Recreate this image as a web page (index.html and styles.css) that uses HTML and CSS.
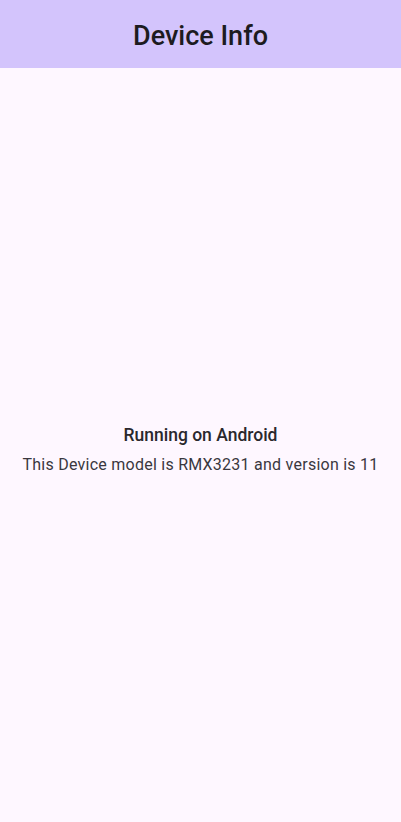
FILE: index.html
```html
<!DOCTYPE html>
<html>
<head>
<meta charset="utf-8">
<link rel="stylesheet" href="styles.css">
</head>
<body>
<div class="app">
  <header class="appbar"><h1 class="title">Device Info</h1></header>
  <main class="content">
    <div class="info">
      <p class="heading">Running on Android</p>
      <p class="detail">This Device model is RMX3231 and version is 11</p>
    </div>
  </main>
</div>
</body>
</html>
```
FILE: styles.css
```css
html, body { margin: 0; padding: 0; }
body { font-family: Roboto, "Noto Sans", sans-serif; background: #fef7ff; }
.app { display: flex; flex-direction: column; height: 822px; }
.appbar { height: 68px; background: #d3c4fc; display: flex; align-items: center; justify-content: center; flex: none; }
.title { margin: 0; font-size: 27px; font-weight: 500; color: #1d1b20; padding-top: 3px; }
.content { flex: 1; display: flex; align-items: center; justify-content: center; }
.info { display: flex; flex-direction: column; align-items: center; gap: 8px; margin-top: 9px; }
.heading { margin: 0; font-size: 17.5px; font-weight: 500; color: #2a282d; line-height: 22px; }
.detail { margin: 0; font-size: 16px; letter-spacing: 0.25px; color: #3a373e; line-height: 22px; }
```
